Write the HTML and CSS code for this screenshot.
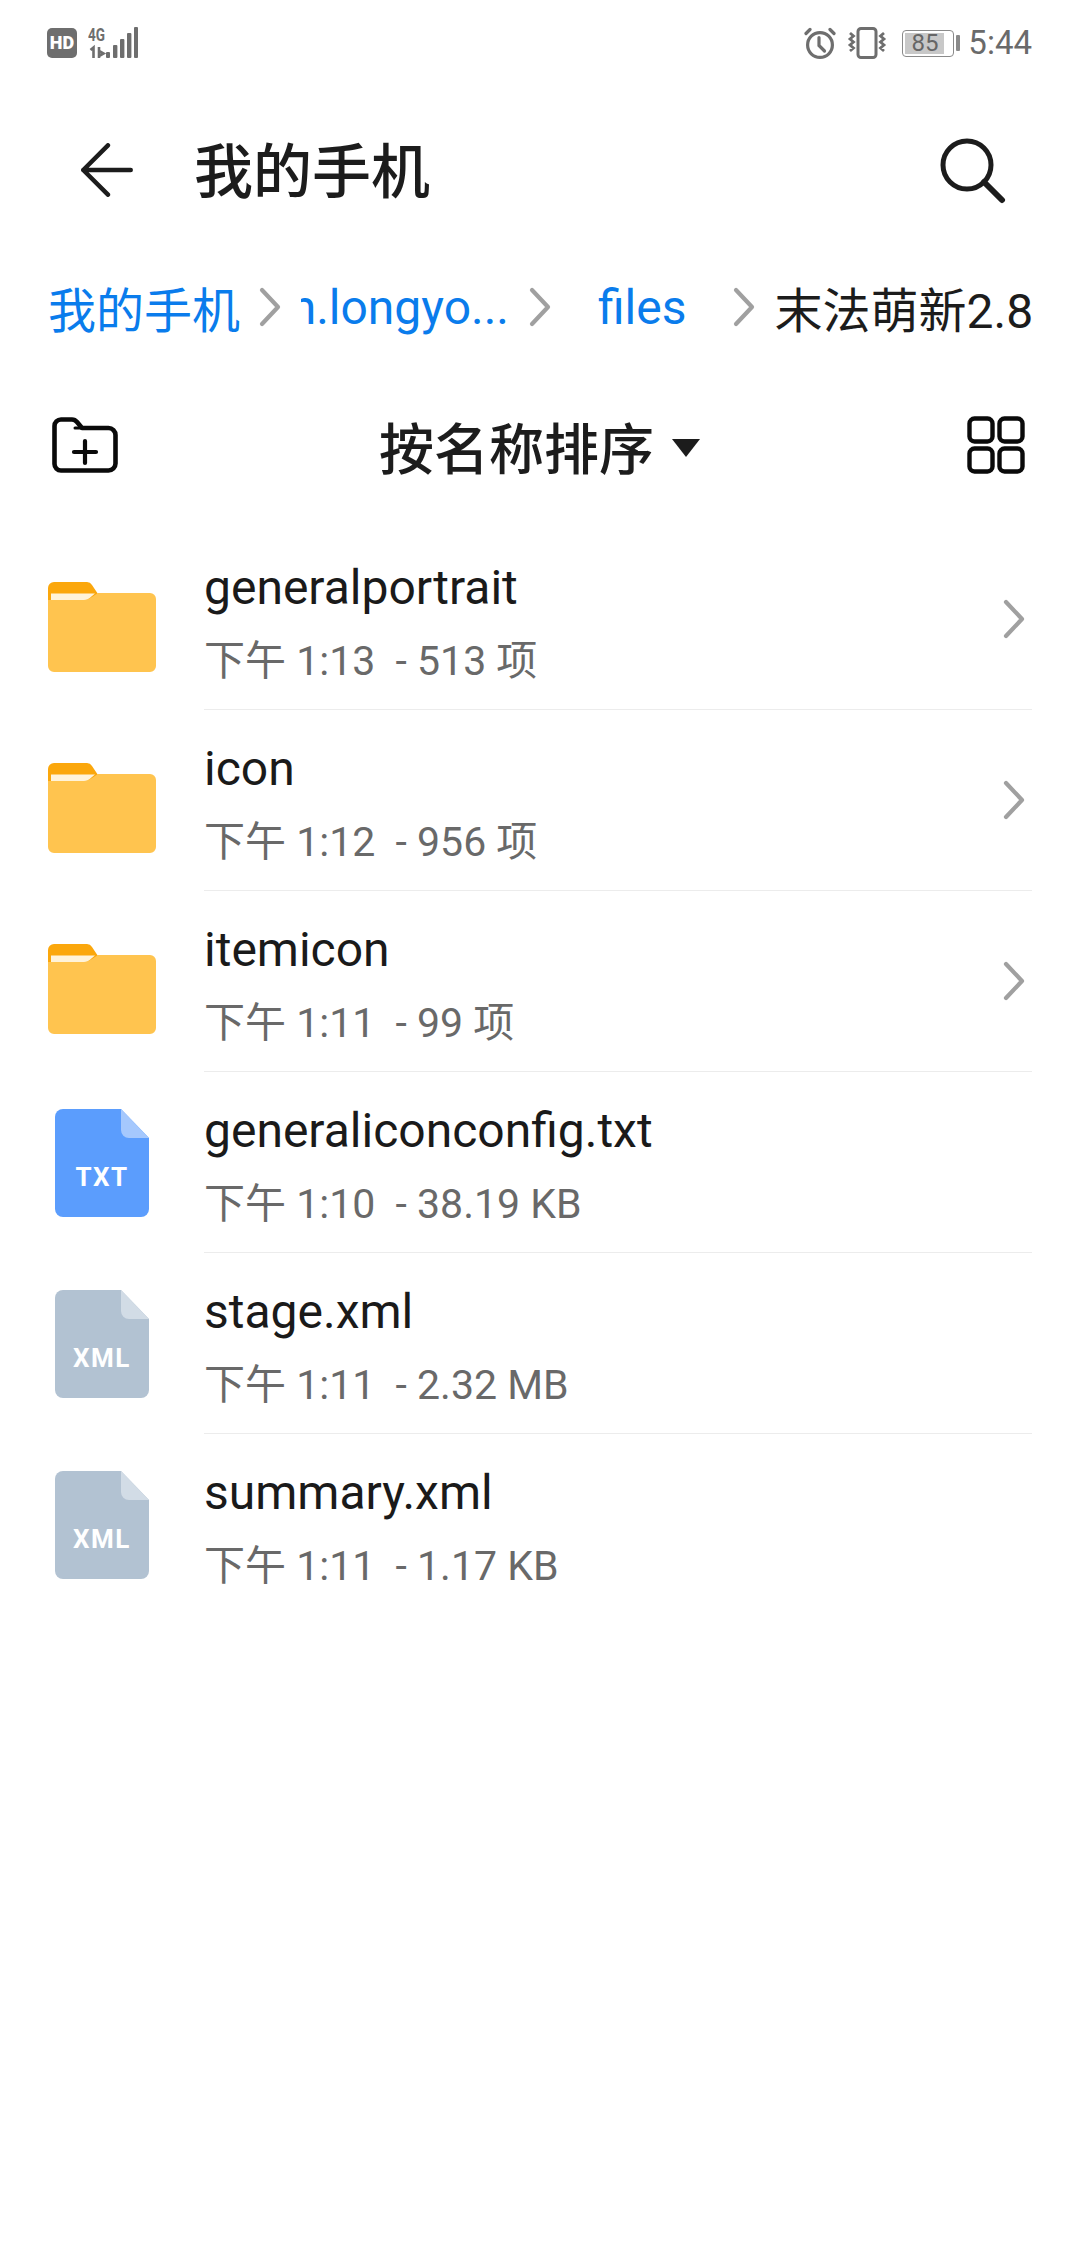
FILE: index.html
```html
<!DOCTYPE html>
<html lang="zh-CN">
<head>
<meta charset="utf-8">
<title>我的手机</title>
<link rel="stylesheet" href="styles.css">
</head>
<body>
<svg class="defs" width="0" height="0" aria-hidden="true">
  <symbol id="chev" viewBox="0 0 22 40"><path d="M3 3 L19 20 L3 37" fill="none" stroke="#a0a0a0" stroke-width="4.2" stroke-linecap="round" stroke-linejoin="round"/></symbol>
  <symbol id="folder" viewBox="0 0 108 90">
    <path d="M0 6a6 6 0 0 1 6-6H39a6 6 0 0 1 5 3L50 12V22H0Z" fill="#fba70c"/>
    <path d="M0 18H36Q40 18 44 15L50 11H102a6 6 0 0 1 6 6V84a6 6 0 0 1-6 6H6a6 6 0 0 1-6-6Z" fill="#ffc44f"/>
    <path d="M3 11.500H47L44 14Q40 18 36 18H3Z" fill="#fff3d9"/>
  </symbol>
</svg>

<header class="status">
  <div class="status-left">
    <svg class="ico-hd" viewBox="0 0 30 30"><rect width="30" height="30" rx="5" fill="#6e6e6e"/><text x="15" y="21" text-anchor="middle" class="hd-t">HD</text></svg>
    <svg class="ico-net" viewBox="0 0 50 32">
      <text x="0" y="14" class="net-t" textLength="17" lengthAdjust="spacingAndGlyphs">4G</text>
      <path d="M2.500 23l3-2.500V31M11 20v11M11 24l4.500 2.500L11 29" fill="none" stroke="#6e6e6e" stroke-width="2.600"/>
      <rect x="18" y="25" width="4" height="6" rx="1" fill="#6e6e6e"/>
      <rect x="25" y="18" width="4.400" height="13" rx="1" fill="#6e6e6e"/>
      <rect x="32" y="12" width="4.400" height="19" rx="1" fill="#6e6e6e"/>
      <rect x="39" y="6" width="4.400" height="25" rx="1" fill="#6e6e6e"/>
      <rect x="46" y="0" width="4" height="31" rx="1" fill="#6e6e6e"/>
    </svg>
  </div>
  <div class="status-right">
    <svg class="ico-alarm" viewBox="0 0 32 32" fill="none" stroke="#6e6e6e" stroke-width="3.200" stroke-linecap="round"><circle cx="16" cy="18" r="12.400"/><path d="M15 10.500V18.500L20.500 24"/><path d="M2 6.500L6 2.500M30 6.500L26 2.500"/></svg>
    <svg class="ico-vib" viewBox="0 0 40 32" fill="none" stroke="#6e6e6e"><rect x="11" y="1.500" width="18" height="29" rx="3" stroke-width="3"/><path d="M3 6l3.500 3-3.500 3 3.500 3-3.500 3 3.500 3-3.500 3M37 6l-3.500 3 3.500 3-3.500 3 3.500 3-3.500 3 3.500 3" stroke-width="2.800"/></svg>
    <div class="battery"><div class="battery-body"><span class="battery-num">85</span></div><div class="battery-cap"></div></div>
    <span class="clock">5:44</span>
  </div>
</header>

<div class="appbar">
  <svg class="ico-back" viewBox="0 0 56 58" fill="none" stroke="#1c1c1c" stroke-width="4.800" stroke-linecap="round" stroke-linejoin="round"><path d="M29 2.500L2.500 29 29 55.500M2.500 29H53.500"/></svg>
  <h1 class="title">我的手机</h1>
  <svg class="ico-search" viewBox="0 0 66 66" fill="none" stroke="#1c1c1c" stroke-linecap="round"><circle cx="27" cy="27" r="24" stroke-width="5"/><path d="M44 44L62 62" stroke-width="6"/></svg>
</div>

<nav class="crumbs">
  <a class="crumb crumb-first">我的手机</a>
  <svg class="chev chev-1"><use href="#chev"/></svg>
  <span class="crumb-clip"><a class="crumb">n.longyo...</a></span>
  <svg class="chev chev-2"><use href="#chev"/></svg>
  <a class="crumb crumb-files">files</a>
  <svg class="chev chev-3"><use href="#chev"/></svg>
  <span class="crumb-current">末法萌新2.8</span>
</nav>

<div class="toolbar">
  <svg class="ico-newfolder" viewBox="0 0 66 56" fill="none" stroke="#0a0a0a" stroke-width="4.600" stroke-linejoin="round" stroke-linecap="round"><path d="M2.500 9a6.500 6.500 0 0 1 6.500-6.500H20q3 0 5 2.500L30 11H56.500a7 7 0 0 1 7 7V46.500a7 7 0 0 1-7 7H9a6.500 6.500 0 0 1-6.500-6.500Z"/><path d="M23 11H56.500" stroke-width="3"/><path d="M22 35H44M33 24V46" stroke-width="4.200"/></svg>
  <div class="sort">
    <span class="sort-label">按名称排序</span>
    <span class="sort-caret"></span>
  </div>
  <svg class="ico-grid" viewBox="0 0 58 58" fill="none" stroke="#0a0a0a" stroke-width="4.400"><rect x="2.500" y="2.500" width="23" height="23" rx="5"/><rect x="32.500" y="2.500" width="23" height="23" rx="5"/><rect x="2.500" y="32.500" width="23" height="23" rx="5"/><rect x="32.500" y="32.500" width="23" height="23" rx="5"/></svg>
</div>

<main class="list">
  <div class="row">
    <svg class="ico-folder"><use href="#folder"/></svg>
    <div class="row-body">
      <div class="row-text"><div class="name">generalportrait</div><div class="meta">下午 1:13&nbsp; - 513 项</div></div>
      <svg class="row-chev"><use href="#chev"/></svg>
    </div>
  </div>
  <div class="row">
    <svg class="ico-folder"><use href="#folder"/></svg>
    <div class="row-body">
      <div class="row-text"><div class="name">icon</div><div class="meta">下午 1:12&nbsp; - 956 项</div></div>
      <svg class="row-chev"><use href="#chev"/></svg>
    </div>
  </div>
  <div class="row">
    <svg class="ico-folder"><use href="#folder"/></svg>
    <div class="row-body">
      <div class="row-text"><div class="name">itemicon</div><div class="meta">下午 1:11&nbsp; - 99 项</div></div>
      <svg class="row-chev"><use href="#chev"/></svg>
    </div>
  </div>
  <div class="row">
    <svg class="ico-file" viewBox="0 0 94 108"><path d="M8 0H66L94 29V100a8 8 0 0 1-8 8H8a8 8 0 0 1-8-8V8a8 8 0 0 1 8-8Z" fill="#5b9dfd"/><path d="M66 0L94 29H74a8 8 0 0 1-8-8Z" fill="#a5c8fd"/><text x="47" y="77" text-anchor="middle" class="file-t">TXT</text></svg>
    <div class="row-body">
      <div class="row-text"><div class="name">generaliconconfig.txt</div><div class="meta">下午 1:10&nbsp; - 38.19 KB</div></div>
    </div>
  </div>
  <div class="row">
    <svg class="ico-file" viewBox="0 0 94 108"><path d="M8 0H66L94 29V100a8 8 0 0 1-8 8H8a8 8 0 0 1-8-8V8a8 8 0 0 1 8-8Z" fill="#b2c2d2"/><path d="M66 0L94 29H74a8 8 0 0 1-8-8Z" fill="#d2dce6"/><text x="47" y="77" text-anchor="middle" class="file-t">XML</text></svg>
    <div class="row-body">
      <div class="row-text"><div class="name">stage.xml</div><div class="meta">下午 1:11&nbsp; - 2.32 MB</div></div>
    </div>
  </div>
  <div class="row row-last">
    <svg class="ico-file" viewBox="0 0 94 108"><path d="M8 0H66L94 29V100a8 8 0 0 1-8 8H8a8 8 0 0 1-8-8V8a8 8 0 0 1 8-8Z" fill="#b2c2d2"/><path d="M66 0L94 29H74a8 8 0 0 1-8-8Z" fill="#d2dce6"/><text x="47" y="77" text-anchor="middle" class="file-t">XML</text></svg>
    <div class="row-body">
      <div class="row-text"><div class="name">summary.xml</div><div class="meta">下午 1:11&nbsp; - 1.17 KB</div></div>
    </div>
  </div>
</main>
</body>
</html>
```
FILE: styles.css
```css
* { box-sizing: border-box; }
html, body { margin: 0; padding: 0; background: #fff; }
body {
  width: 1080px;
  height: 2244px;
  overflow: hidden;
  font-family: Roboto, "Noto Sans CJK SC", sans-serif;
  color: #1c1c1c;
}
.defs { display: block; width: 0; height: 0; overflow: hidden; }

/* status bar */
.status {
  height: 88px;
  padding: 27px 48px 0 47px;
  display: flex;
  justify-content: space-between;
  align-items: flex-start;
}
.status-left, .status-right { display: flex; align-items: center; }
.ico-hd { width: 30px; height: 30px; }
.hd-t { font: 900 18px Roboto, sans-serif; fill: #fff; }
.ico-net { width: 50px; height: 32px; margin-left: 11px; }
.net-t { font: 700 18px Roboto, sans-serif; fill: #6e6e6e; }
.ico-alarm { width: 32px; height: 32px; }
.ico-vib { width: 40px; height: 32px; margin-left: 11px; }
.battery { display: flex; align-items: center; margin-left: 15px; }
.battery-body {
  width: 52px;
  height: 27px;
  border: 1.5px solid #8a8a8a;
  border-radius: 4px;
  padding: 2px;
  display: flex;
}
.battery-num {
  width: 85%;
  background: #c8c8c8;
  font-size: 24px;
  line-height: 20px;
  text-align: center;
  color: #666;
}
.battery-cap { width: 4px; height: 16px; margin-left: 2px; background: #8a8a8a; border-radius: 1px; }
.clock { margin-left: 8px; font-size: 33px; line-height: 32px; color: #6a6a6a; }

/* app bar */
.appbar {
  height: 168px;
  padding: 0 48px 0 80px;
  display: flex;
  align-items: center;
}
.ico-back { width: 54px; height: 54px; margin-bottom: 4px; }
.title { margin: 0 0 10px 60px; flex: 1; font-size: 59px; font-weight: 500; color: #1c1c1c; }
.ico-search { width: 66px; height: 66px; margin: 0 26px 3px 0; }

/* breadcrumb */
.crumbs {
  height: 92px;
  margin-top: 5px;
  padding-left: 48px;
  display: flex;
  align-items: center;
  font-size: 48px;
  white-space: nowrap;
}
.crumb { color: #0a7cec; }
.chev { width: 22px; height: 40px; flex: none; }
.chev-1 { margin-left: 19px; }
.crumb-clip { width: 208px; margin-left: 20px; overflow: hidden; display: flex; justify-content: flex-end; }
.chev-2 { margin-left: 20px; }
.crumb-files { margin-left: 47px; }
.chev-3 { margin-left: 46px; }
.crumb-current { margin-left: 20px; color: #1c1c1c; }

/* sort toolbar */
.toolbar {
  height: 110px;
  margin: 37px 0 29px;
  padding: 0 55px 0 52px;
  display: flex;
  align-items: center;
  justify-content: space-between;
}
.ico-newfolder { width: 66px; height: 56px; }
.sort { display: flex; align-items: center; margin-right: 6px; }
.sort-label { font-size: 55px; font-weight: 500; color: #1c1c1c; }
.sort-caret {
  margin: 6px 0 0 18px;
  width: 0;
  height: 0;
  border-left: 14px solid transparent;
  border-right: 14px solid transparent;
  border-top: 18px solid #1c1c1c;
}
.ico-grid { width: 58px; height: 58px; }

/* list */
.list { display: block; }
.row { display: flex; height: 181px; }
.ico-folder { width: 108px; height: 90px; margin: 53px 48px 0 48px; flex: none; }
.ico-file { width: 94px; height: 108px; margin: 37px 55px 0 55px; flex: none; }
.row-body {
  flex: 1;
  margin-right: 48px;
  display: flex;
  align-items: center;
  justify-content: space-between;
  border-bottom: 1.5px solid #ececec;
}
.row-last .row-body { border-bottom: 0; }
.row-text { display: flex; flex-direction: column; padding-top: 6px; }
.name { font-size: 48px; line-height: 60px; color: #1a1a1a; }
.meta { font-size: 41px; line-height: 52px; margin-top: 17px; color: #696969; }
.row-chev { width: 22px; height: 40px; margin-right: 7px; }
.file-t { font: 700 26px Roboto, sans-serif; fill: #fff; letter-spacing: 1.5px; }
```
